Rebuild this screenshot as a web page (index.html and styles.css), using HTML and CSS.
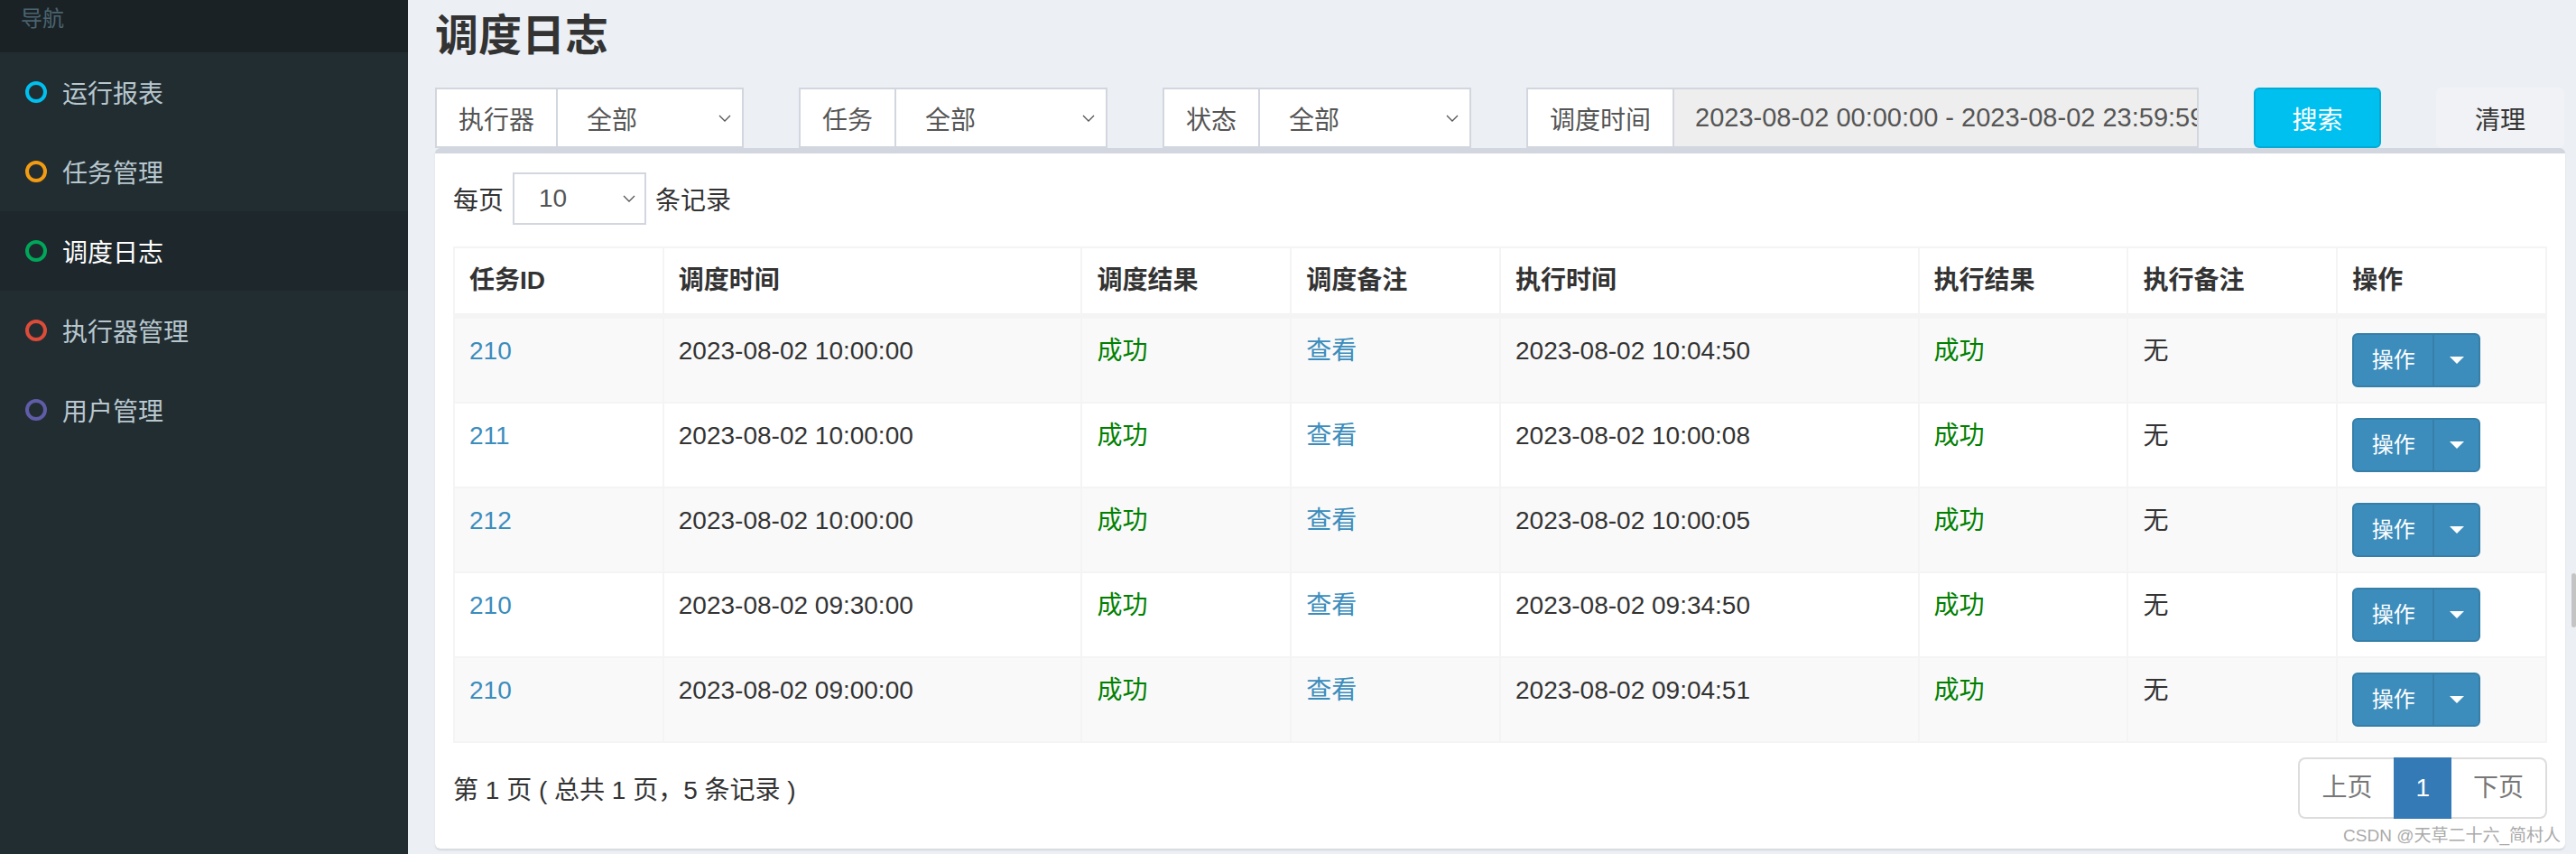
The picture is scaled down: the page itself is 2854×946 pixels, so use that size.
FILE: index.html
```html
<!DOCTYPE html>
<html lang="zh-CN">
<head>
    <meta charset="UTF-8">
    <meta name="viewport" content="width=device-width, initial-scale=1.0">
    <title>调度日志</title>
    <link rel="stylesheet" href="styles.css">
</head>
<body>

<aside class="sidebar">
    <div class="nav-header">导航</div>
    <ul class="nav-menu">
        <li><svg class="dot" viewBox="0 0 24 24"><circle cx="12" cy="12" r="10" stroke="#00c0ef"/></svg>运行报表</li>
        <li><svg class="dot" viewBox="0 0 24 24"><circle cx="12" cy="12" r="10" stroke="#f39c12"/></svg>任务管理</li>
        <li class="active"><svg class="dot" viewBox="0 0 24 24"><circle cx="12" cy="12" r="10" stroke="#00a65a"/></svg>调度日志</li>
        <li><svg class="dot" viewBox="0 0 24 24"><circle cx="12" cy="12" r="10" stroke="#dd4b39"/></svg>执行器管理</li>
        <li><svg class="dot" viewBox="0 0 24 24"><circle cx="12" cy="12" r="10" stroke="#605ca8"/></svg>用户管理</li>
    </ul>
</aside>

<main class="content">
    <h1 class="page-title">调度日志</h1>

    <div class="filters">
        <div class="input-group">
            <span class="addon">执行器</span>
            <div class="select">全部<svg class="chevron" viewBox="0 0 14 8"><polyline points="1,1 7,7 13,1"/></svg></div>
        </div>
        <div class="input-group">
            <span class="addon">任务</span>
            <div class="select">全部<svg class="chevron" viewBox="0 0 14 8"><polyline points="1,1 7,7 13,1"/></svg></div>
        </div>
        <div class="input-group">
            <span class="addon">状态</span>
            <div class="select">全部<svg class="chevron" viewBox="0 0 14 8"><polyline points="1,1 7,7 13,1"/></svg></div>
        </div>
        <div class="input-group">
            <span class="addon">调度时间</span>
            <div class="date-input">2023-08-02 00:00:00 - 2023-08-02 23:59:59</div>
        </div>
        <button class="btn btn-search">搜索</button>
        <button class="btn btn-clear">清理</button>
    </div>

    <div class="box">
        <div class="length">
            每页
            <div class="select select-sm">10<svg class="chevron" viewBox="0 0 14 8"><polyline points="1,1 7,7 13,1"/></svg></div>
            条记录
        </div>

        <table class="log-table">
            <colgroup>
                <col style="width:10%"><col style="width:20%"><col style="width:10%"><col style="width:10%">
                <col style="width:20%"><col style="width:10%"><col style="width:10%"><col style="width:10%">
            </colgroup>
            <thead>
                <tr>
                    <th>任务ID</th><th>调度时间</th><th>调度结果</th><th>调度备注</th>
                    <th>执行时间</th><th>执行结果</th><th>执行备注</th><th>操作</th>
                </tr>
            </thead>
            <tbody>
                <tr>
                    <td><a>210</a></td><td>2023-08-02 10:00:00</td><td class="ok">成功</td><td><a>查看</a></td>
                    <td>2023-08-02 10:04:50</td><td class="ok">成功</td><td>无</td>
                    <td><div class="btn-group"><span class="btn-op">操作</span><span class="btn-caret"><svg viewBox="0 0 16 8"><path d="M0 0h16L8 8z"/></svg></span></div></td>
                </tr>
                <tr>
                    <td><a>211</a></td><td>2023-08-02 10:00:00</td><td class="ok">成功</td><td><a>查看</a></td>
                    <td>2023-08-02 10:00:08</td><td class="ok">成功</td><td>无</td>
                    <td><div class="btn-group"><span class="btn-op">操作</span><span class="btn-caret"><svg viewBox="0 0 16 8"><path d="M0 0h16L8 8z"/></svg></span></div></td>
                </tr>
                <tr>
                    <td><a>212</a></td><td>2023-08-02 10:00:00</td><td class="ok">成功</td><td><a>查看</a></td>
                    <td>2023-08-02 10:00:05</td><td class="ok">成功</td><td>无</td>
                    <td><div class="btn-group"><span class="btn-op">操作</span><span class="btn-caret"><svg viewBox="0 0 16 8"><path d="M0 0h16L8 8z"/></svg></span></div></td>
                </tr>
                <tr>
                    <td><a>210</a></td><td>2023-08-02 09:30:00</td><td class="ok">成功</td><td><a>查看</a></td>
                    <td>2023-08-02 09:34:50</td><td class="ok">成功</td><td>无</td>
                    <td><div class="btn-group"><span class="btn-op">操作</span><span class="btn-caret"><svg viewBox="0 0 16 8"><path d="M0 0h16L8 8z"/></svg></span></div></td>
                </tr>
                <tr>
                    <td><a>210</a></td><td>2023-08-02 09:00:00</td><td class="ok">成功</td><td><a>查看</a></td>
                    <td>2023-08-02 09:04:51</td><td class="ok">成功</td><td>无</td>
                    <td><div class="btn-group"><span class="btn-op">操作</span><span class="btn-caret"><svg viewBox="0 0 16 8"><path d="M0 0h16L8 8z"/></svg></span></div></td>
                </tr>
            </tbody>
        </table>

        <div class="box-footer">
            <span>第 1 页 ( 总共 1 页，5 条记录 )</span>
            <ul class="pagination">
                <li class="first">上页</li>
                <li class="active">1</li>
                <li class="last">下页</li>
            </ul>
        </div>
    </div>
</main>

<div class="watermark">CSDN @天草二十六_简村人</div>
<div class="scroll-thumb"></div>

</body>
</html>
```

FILE: styles.css
```css
* {
    box-sizing: border-box;
}

body {
    margin: 0;
    height: 946px;
    display: flex;
    font-family: "Liberation Sans", "Noto Sans CJK SC", sans-serif;
    font-size: 28px;
    color: #333;
    background: #ecf0f5;
    overflow: hidden;
}

/* sidebar */
.sidebar {
    width: 452px;
    flex-shrink: 0;
    background: #222d32;
}

.nav-header {
    height: 58px;
    background: #1a2226;
    color: #4b646f;
    font-size: 24px;
    line-height: 42px;
    padding-left: 23px;
}

.nav-menu {
    list-style: none;
    margin: 0;
    padding: 0;
}

.nav-menu li {
    height: 88px;
    display: flex;
    align-items: center;
    padding-left: 28px;
    color: #b8c7ce;
}

.nav-menu li.active {
    background: #1e282c;
    color: #fff;
}

.dot {
    width: 24px;
    height: 24px;
    margin-right: 17px;
}

.dot circle {
    fill: none;
    stroke-width: 4;
}

/* content */
.content {
    flex: 1;
    padding: 0 12px 0 30px;
}

.page-title {
    margin: 0;
    height: 80px;
    font-size: 48px;
    line-height: 80px;
    font-weight: bold;
    color: #333;
}

.filters {
    margin-top: 17px;
    height: 67px;
    display: grid;
    grid-template-columns: 342px 342px 342px 745px 141px 142px;
    column-gap: 61px;
}

.input-group {
    display: flex;
    height: 67px;
}

.addon {
    display: flex;
    align-items: center;
    padding: 0 24px;
    background: #fff;
    border: 2px solid #d2d6de;
    color: #555;
    white-space: nowrap;
}

.select {
    flex: 1;
    display: flex;
    align-items: center;
    justify-content: space-between;
    padding: 0 12px 0 32px;
    background: #fff;
    border: 2px solid #d2d6de;
    border-left: 0;
    color: #555;
}

.chevron {
    width: 14px;
    height: 8px;
}

.chevron polyline {
    fill: none;
    stroke: #555;
    stroke-width: 1.3;
}

.date-input {
    flex: 1;
    display: flex;
    align-items: center;
    padding-left: 23px;
    background: #eee;
    border: 2px solid #d2d6de;
    border-left: 0;
    color: #555;
    font-size: 29px;
    white-space: nowrap;
    overflow: hidden;
}

.btn {
    font-family: inherit;
    font-size: 28px;
    border-radius: 6px;
    border: 2px solid transparent;
    cursor: pointer;
}

.btn-search {
    background: #00c0ef;
    border-color: #00acd6;
    color: #fff;
}

.btn-clear {
    background: #f0f2f5;
    color: #333;
}

/* box */
.box {
    background: #fff;
    border-top: 6px solid #d2d6de;
    border-radius: 6px;
    box-shadow: 0 2px 2px rgba(0, 0, 0, 0.1);
    padding: 20px 20px 33px;
}

.length {
    height: 60px;
    display: flex;
    align-items: center;
    gap: 10px;
}

.select-sm {
    flex: none;
    width: 148px;
    height: 58px;
    border-left: 2px solid #d2d6de;
    padding: 0 10px 0 27px;
}

.log-table {
    width: 100%;
    margin-top: 23px;
    border-collapse: collapse;
    table-layout: fixed;
}

.log-table th,
.log-table td {
    border: 2px solid #f4f4f4;
    padding: 16px;
    text-align: left;
    vertical-align: top;
    line-height: 40px;
    white-space: nowrap;
}

.log-table thead th {
    border-bottom-width: 6px;
    font-weight: bold;
}

.log-table tbody tr:nth-child(odd) {
    background: #f9f9f9;
}

.log-table a {
    color: #3c8dbc;
}

.log-table .ok {
    color: #008000;
}

.btn-group {
    display: inline-flex;
    height: 60px;
    vertical-align: top;
}

.btn-op {
    width: 90px;
    display: flex;
    align-items: center;
    justify-content: center;
    font-size: 24px;
    color: #fff;
    background: #3c8dbc;
    border: 2px solid #367fa9;
    border-right: 1px solid #367fa9;
    border-radius: 6px 0 0 6px;
}

.btn-caret {
    width: 52px;
    display: flex;
    align-items: center;
    justify-content: center;
    background: #3c8dbc;
    border: 2px solid #367fa9;
    border-left: 1px solid #367fa9;
    border-radius: 0 6px 6px 0;
}

.btn-caret svg {
    width: 16px;
    height: 8px;
    fill: #fff;
}

.box-footer {
    margin-top: 16px;
    display: flex;
    align-items: center;
    justify-content: space-between;
}

.pagination {
    display: flex;
    list-style: none;
    margin: 0;
    padding: 0;
}

.pagination li {
    height: 68px;
    line-height: 64px;
    padding: 0 24px;
    border-top: 2px solid #ddd;
    border-bottom: 2px solid #ddd;
    color: #777;
}

.pagination .first {
    border-left: 2px solid #ddd;
    border-radius: 8px 0 0 8px;
}

.pagination .last {
    border-right: 2px solid #ddd;
    border-radius: 0 8px 8px 0;
}

.pagination .active {
    background: #337ab7;
    border-color: #337ab7;
    color: #fff;
}

.watermark {
    position: absolute;
    right: 17px;
    bottom: 9px;
    font-size: 19px;
    color: #aaa;
}

.scroll-thumb {
    position: absolute;
    right: 0;
    top: 635px;
    width: 5px;
    height: 60px;
    border-radius: 3px;
    background: #c4c4c4;
}
```
